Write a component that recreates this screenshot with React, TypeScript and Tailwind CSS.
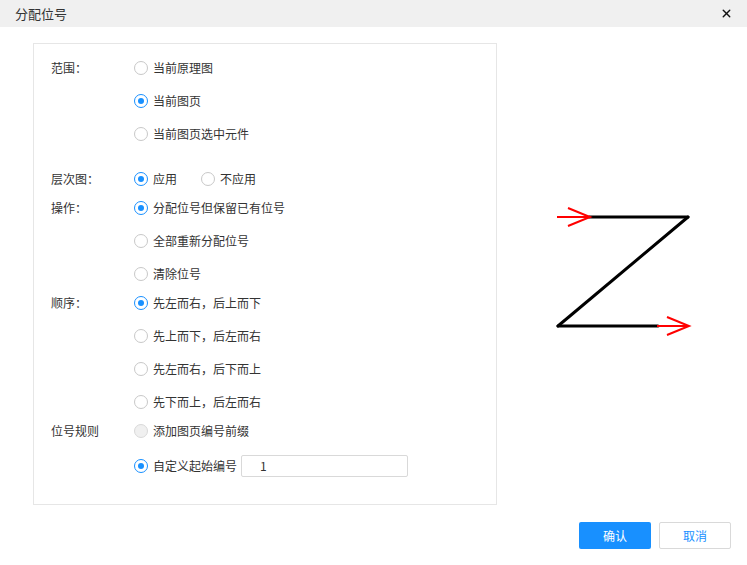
import { X } from 'lucide-react';

type Opt = { label: string; checked?: boolean; disabled?: boolean };

function Radio({ checked, disabled }: { checked?: boolean; disabled?: boolean }) {
  if (checked) {
    return (
      <span className="flex h-[14px] w-[14px] shrink-0 items-center justify-center rounded-full border border-[#1890ff] bg-white">
        <span className="h-[6px] w-[6px] rounded-full bg-[#1890ff]" />
      </span>
    );
  }
  return (
    <span
      className={
        disabled
          ? 'h-[14px] w-[14px] shrink-0 rounded-full border border-[#d9d9d9] bg-[#f0f0f0]'
          : 'h-[14px] w-[14px] shrink-0 rounded-full border border-[#c8c8c8] bg-white'
      }
    />
  );
}

function Option({ label, checked, disabled }: Opt) {
  return (
    <div className="flex items-center gap-[5px]">
      <Radio checked={checked} disabled={disabled} />
      <span>{label}</span>
    </div>
  );
}

function Section({ label, options, className = '' }: { label: string; options: Opt[]; className?: string }) {
  return (
    <div className={`flex ${className}`}>
      <div className="flex h-[29px] w-[83px] shrink-0 items-center">{label}</div>
      <div className="flex flex-col gap-1">
        {options.map((o) => (
          <div key={o.label} className="flex h-[29px] items-center">
            <Option {...o} />
          </div>
        ))}
      </div>
    </div>
  );
}

function ZOrder() {
  return (
    <svg width="150" height="140" viewBox="0 0 150 140" className="mt-[157px] ml-[53px] shrink-0">
      <g stroke="#000" strokeWidth="3" fill="none" strokeLinecap="round">
        <line x1="39" y1="17" x2="138" y2="17" />
        <line x1="138" y1="17" x2="8" y2="126" />
        <line x1="8" y1="126" x2="108" y2="126" />
      </g>
      <g stroke="#ff0000" strokeWidth="2" fill="none">
        <line x1="7" y1="17" x2="40" y2="17" />
        <polyline points="18,8 40,17 18,26" />
        <line x1="107" y1="126" x2="139" y2="126" />
        <polyline points="117,117 139,126 117,135" />
      </g>
    </svg>
  );
}

export default function App() {
  return (
    <div
      className="flex h-[565px] w-[747px] flex-col bg-white text-[12px] text-[#333]"
      style={{ fontFamily: '"Noto Sans CJK SC", "Noto Sans", sans-serif' }}
    >
      <div className="flex h-[27px] shrink-0 items-center justify-between bg-[#f0f0f0] pl-[15px] pr-[14px]">
        <span className="text-[13px] text-[#333]">分配位号</span>
        <X size={13} strokeWidth={2.5} className="text-[#111]" />
      </div>

      <div className="mt-[16px] flex">
        <div className="ml-[33px] flex h-[462px] w-[464px] flex-col border border-[#e6e6e6] pl-[17px] pt-[9px]">
          <Section
            label="范围："
            options={[{ label: '当前原理图' }, { label: '当前图页', checked: true }, { label: '当前图页选中元件' }]}
          />
          <div className="mt-[16px] flex h-[29px] items-center">
            <div className="w-[83px] shrink-0">层次图：</div>
            <div className="flex items-center gap-[24px]">
              <Option label="应用" checked />
              <Option label="不应用" />
            </div>
          </div>
          <Section
            label="操作："
            options={[{ label: '分配位号但保留已有位号', checked: true }, { label: '全部重新分配位号' }, { label: '清除位号' }]}
          />
          <Section
            label="顺序："
            options={[
              { label: '先左而右，后上而下', checked: true },
              { label: '先上而下，后左而右' },
              { label: '先左而右，后下而上' },
              { label: '先下而上，后左而右' },
            ]}
          />
          <div className="flex">
            <div className="flex h-[29px] w-[83px] shrink-0 items-center">位号规则</div>
            <div className="flex flex-col gap-[6px]">
              <div className="flex h-[29px] items-center">
                <Option label="添加图页编号前缀" disabled />
              </div>
              <div className="flex h-[29px] items-center gap-[4px]">
                <Option label="自定义起始编号" checked />
                <div className="flex h-[22px] w-[167px] items-center rounded-[2px] border border-[#d9d9d9] pl-[18px] text-[#333]">
                  1
                </div>
              </div>
            </div>
          </div>
        </div>
        <ZOrder />
      </div>

      <div className="mt-[17px] flex justify-end gap-[8px] pr-[16px]">
        <button className="flex h-[27px] w-[72px] items-center justify-center rounded-[2px] bg-[#1890ff] text-white">
          确认
        </button>
        <button className="flex h-[27px] w-[72px] items-center justify-center rounded-[2px] border border-[#d9d9d9] bg-white text-[#1890ff]">
          取消
        </button>
      </div>
    </div>
  );
}
